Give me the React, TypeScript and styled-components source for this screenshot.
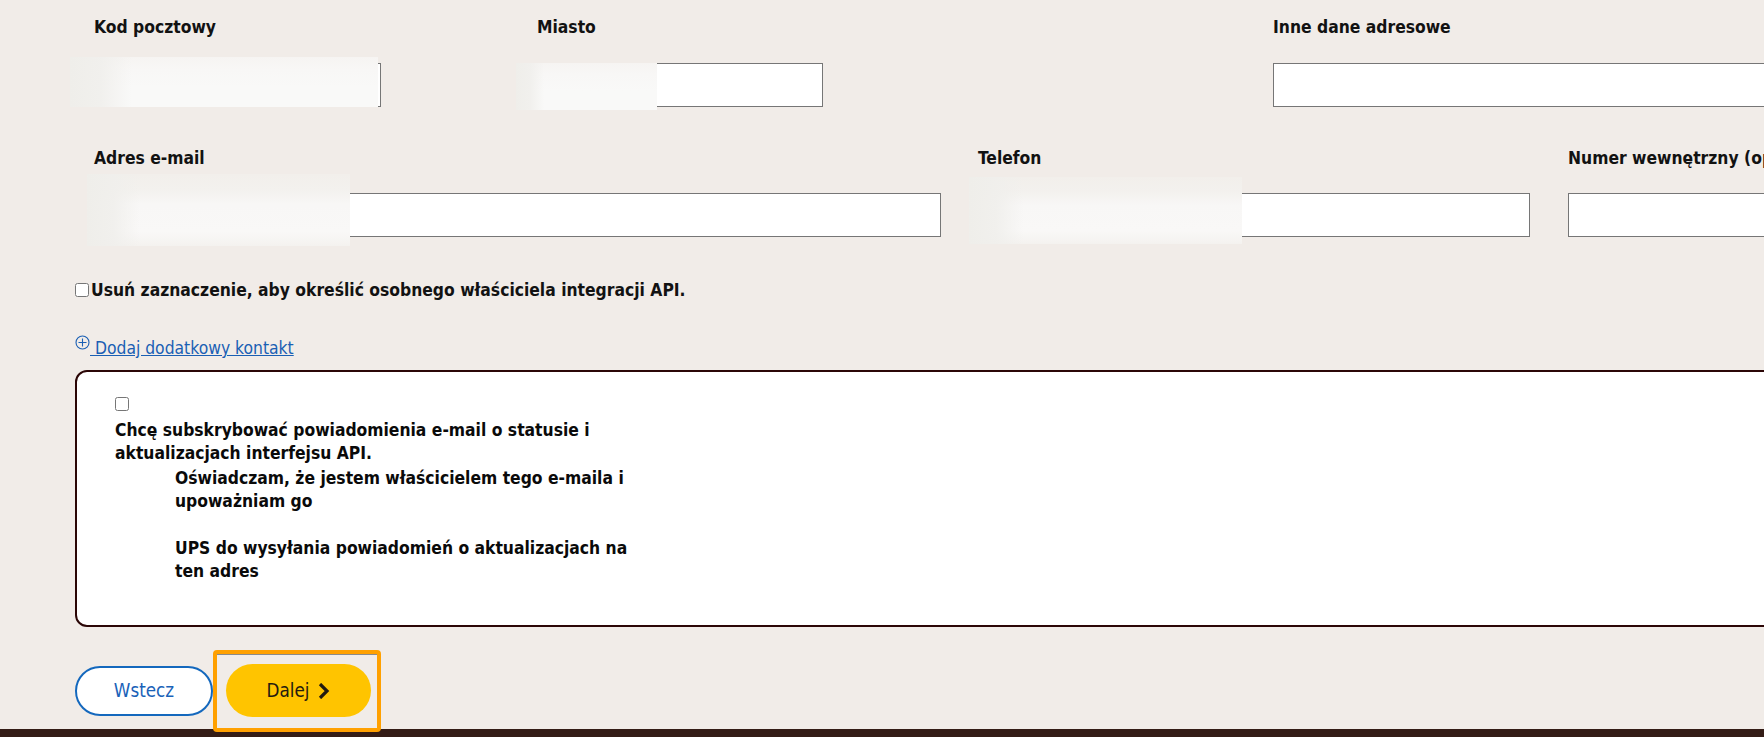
import React from "react";
import styled, { createGlobalStyle } from "styled-components";

const Global = createGlobalStyle`
  html, body { margin: 0; padding: 0; background: #f1ece8; overflow: hidden; }
  body { font-family: "DejaVu Sans Condensed", "DejaVu Sans", sans-serif; color: #121212; }
`;

const Page = styled.div`
  width: 1764px;
  height: 737px;
  position: relative;
  overflow: hidden;
  background: #f1ece8;
  padding: 15px 0 0 75px;
  box-sizing: border-box;
`;

const FieldRow = styled.div<{ $columns: string }>`
  display: grid;
  grid-template-columns: ${(p) => p.$columns};
  padding-left: 19px;
  margin-bottom: 39px;
`;

const Field = styled.div`
  position: relative;
`;

const Label = styled.label<{ $gap: number }>`
  display: block;
  font-size: 17.33px;
  font-weight: 700;
  line-height: 24px;
  margin-bottom: ${(p) => p.$gap}px;
  white-space: nowrap;
`;

const TextInput = styled.input<{ $width: number }>`
  display: block;
  box-sizing: border-box;
  width: ${(p) => p.$width}px;
  height: 44px;
  background: #fff;
  border: 1px solid #767676;
  padding: 0;
`;

const Redaction = styled.div<{ $left: number; $top: number; $width: number; $height: number; $soft?: boolean }>`
  position: absolute;
  left: ${(p) => p.$left}px;
  top: ${(p) => p.$top}px;
  width: ${(p) => p.$width}px;
  height: ${(p) => p.$height}px;
  background:
    linear-gradient(90deg, #efeeea 0, rgba(240, 239, 236, 0.9) 10%, rgba(249, 249, 248, 0) 20%),
    linear-gradient(
      180deg,
      ${(p) => (p.$soft ? "#f2efeb 0, #f3f1ee 22%, #f8f7f6 42%, #f9f8f7 80%, #f4f2ef 100%" : "#f6f4f2 0, #f8f7f6 25%, #f9f9f8 60%, #f9f9f8 100%")}
    );
`;

const CheckRow = styled.div`
  display: flex;
  align-items: center;
  height: 24px;
  margin-top: 41px;
  font-size: 17.33px;
  font-weight: 700;
`;

const Check = styled.input.attrs({ type: "checkbox" })`
  width: 14px;
  height: 14px;
  margin: 0 2px 0 0;
`;

const AddLink = styled.a`
  display: flex;
  align-items: flex-start;
  margin-top: 34px;
  height: 24px;
  width: fit-content;
  color: #1a5fb4;
  font-size: 17.33px;
  line-height: 25px;
  text-decoration: underline;
  white-space: pre;
  svg {
    margin-top: -1px;
  }
`;

const Card = styled.section`
  box-sizing: border-box;
  width: 1800px;
  height: 257px;
  margin-top: 10px;
  border: 2px solid #2b0606;
  border-radius: 12px;
  background: #fff;
  padding: 25px 0 0 38px;
`;

const CardCheck = styled(Check)`
  display: block;
  margin: 0 0 8px;
`;

const CardText = styled.p`
  margin: 0 0 3px;
  width: 500px;
  font-size: 17.33px;
  font-weight: 700;
  line-height: 22.5px;
  color: #0a0a0a;
`;

const Declaration = styled(CardText)`
  margin: 0 0 25px 60px;
  width: 470px;
`;

const Actions = styled.div`
  display: flex;
  align-items: center;
  gap: 13px;
  margin-top: 37px;
`;

const PillBase = styled.button`
  box-sizing: border-box;
  border-radius: 27px;
  font-family: "DejaVu Sans Condensed", "DejaVu Sans", sans-serif;
  font-size: 18.67px;
  display: flex;
  align-items: center;
  justify-content: center;
  padding: 0;
`;

const BackButton = styled(PillBase)`
  width: 138px;
  height: 50px;
  background: #fff;
  border: 2px solid #1468bd;
  color: #1a62b8;
`;

const NextButton = styled(PillBase)`
  position: relative;
  z-index: 1;
  width: 145px;
  height: 53px;
  background: #ffc400;
  border: 0;
  color: #231a10;
  gap: 9px;
`;

const FocusRing = styled.span`
  position: absolute;
  left: -13px;
  top: -14px;
  width: 168px;
  height: 82px;
  box-sizing: border-box;
  border: 4px solid #ffa000;
  border-radius: 4px;
  box-shadow: inset 0 1px 0 #8a8a8a;
  pointer-events: none;
`;

const Footer = styled.footer`
  position: absolute;
  left: 0;
  right: 0;
  bottom: 0;
  height: 8px;
  background: #341c16;
`;

export default function App() {
  return (
    <Page>
      <Global />
      <FieldRow $columns="443px 736px 1fr">
        <Field>
          <Label $gap={24}>Kod pocztowy</Label>
          <TextInput $width={287} />
          <Redaction $left={-24} $top={42} $width={308} $height={50} />
        </Field>
        <Field>
          <Label $gap={24}>Miasto</Label>
          <TextInput $width={286} />
          <Redaction $left={-21} $top={48} $width={141} $height={47} />
        </Field>
        <Field>
          <Label $gap={24}>Inne dane adresowe</Label>
          <TextInput $width={600} />
        </Field>
      </FieldRow>
      <FieldRow $columns="884px 590px 1fr">
        <Field>
          <Label $gap={23}>Adres e-mail</Label>
          <TextInput $width={847} />
          <Redaction $soft $left={-7} $top={28} $width={263} $height={72} />
        </Field>
        <Field>
          <Label $gap={23}>Telefon</Label>
          <TextInput $width={552} />
          <Redaction $soft $left={-9} $top={31} $width={273} $height={67} />
        </Field>
        <Field>
          <Label $gap={23}>Numer wewnętrzny (opcjonalnie)</Label>
          <TextInput $width={300} />
        </Field>
      </FieldRow>
      <CheckRow>
        <Check />
        Usuń zaznaczenie, aby określić osobnego właściciela integracji API.
      </CheckRow>
      <AddLink href="#">
        <svg width="15" height="15" viewBox="0 0 15 15" fill="none" stroke="#1a5fb4" strokeWidth="1.1">
          <circle cx="7.5" cy="7.5" r="6.5" />
          <path d="M7.5 3.5v8M3.5 7.5h8" />
        </svg>
        {" Dodaj dodatkowy kontakt"}
      </AddLink>
      <Card>
        <CardCheck />
        <CardText>Chcę subskrybować powiadomienia e-mail o statusie i aktualizacjach interfejsu API.</CardText>
        <Declaration>Oświadczam, że jestem właścicielem tego e-maila i upoważniam go</Declaration>
        <Declaration>UPS do wysyłania powiadomień o aktualizacjach na ten adres</Declaration>
      </Card>
      <Actions>
        <BackButton>Wstecz</BackButton>
        <NextButton>
          Dalej
          <svg width="12" height="16" viewBox="0 0 12 16" fill="none" stroke="#231a10" strokeWidth="3.2">
            <path d="M2 1l7 7-7 7" />
          </svg>
          <FocusRing />
        </NextButton>
      </Actions>
      <Footer />
    </Page>
  );
}
